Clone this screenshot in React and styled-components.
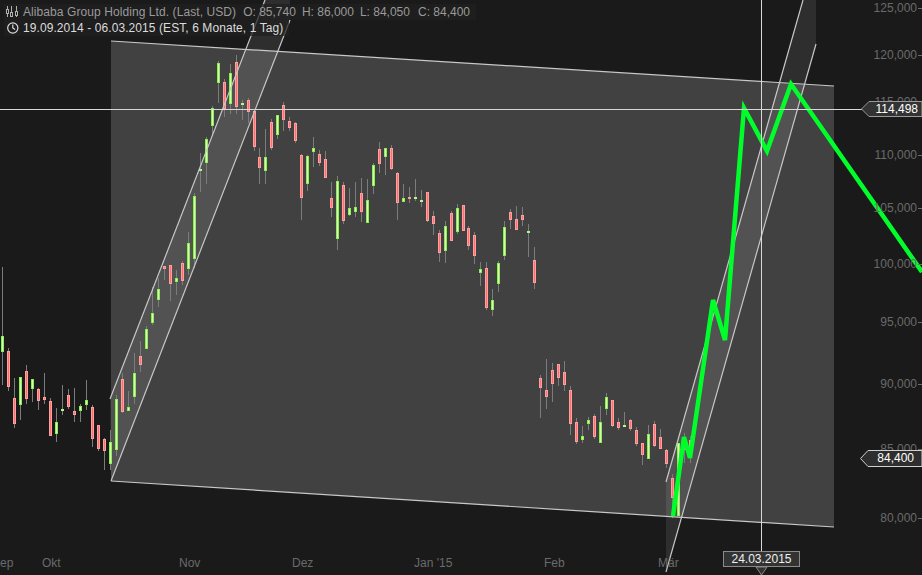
import React from "react";
import styled, { createGlobalStyle } from "styled-components";

const GlobalStyle = createGlobalStyle`
  html, body {
    margin: 0;
    padding: 0;
    background: #1a1a1a;
  }
`;

const Page = styled.div`
  position: relative;
  width: 922px;
  height: 575px;
  overflow: hidden;
  background: #1a1a1a;
  font-family: "Liberation Sans", Arial, sans-serif;
  font-size: 12px;
`;

const Chart = styled.svg`
  display: block;
  width: 922px;
  height: 575px;
`;

const Legend = styled.div`
  position: absolute;
  top: 4px;
  left: 4px;
  display: flex;
  flex-direction: column;
  align-items: flex-start;
`;

const LegendRow = styled.div`
  display: flex;
  align-items: center;
  gap: 4px;
  height: 16px;
  padding: 0 6px 0 2px;
  background: rgba(32, 32, 32, 0.72);
  color: ${({ $bright }) => ($bright ? "#dcdcdc" : "#9a9a9a")};
  letter-spacing: 0.08px;
  white-space: nowrap;
`;

const Title = styled.span`
  margin-right: 1px;
`;

const Value = styled.span`
  margin-left: 2px;
  letter-spacing: 0;
  &:last-child {
    margin-left: 4px;
  }
`;

const PriceTag = styled.div`
  position: absolute;
  top: ${({ $top }) => $top}px;
  left: ${({ $left }) => $left}px;
  width: ${({ $width }) => $width}px;
  height: 16px;
  display: flex;
  align-items: center;
  justify-content: flex-end;
  padding-right: ${({ $pad }) => $pad}px;
  box-sizing: border-box;
  color: #fff;
`;

const TagShape = styled.svg`
  position: absolute;
  top: 0;
  left: 0;
`;

const TagText = styled.span`
  position: relative;
`;

const DateTag = styled.div`
  position: absolute;
  top: 551px;
  left: 723px;
  width: 77px;
  height: 16px;
  box-sizing: border-box;
  display: flex;
  align-items: center;
  justify-content: center;
  background: #333;
  border: 1px solid #8a8a8a;
  color: #f0f0f0;
`;

// x, wick top, wick bottom, body top, body bottom, g = green / r = red
const candles = [
  [2, 267, 385, 336, 352, "g"], [8, 348, 391, 351, 387, "r"], [14, 378, 428, 398, 424, "r"],
  [20, 377, 420, 377, 405, "g"], [26, 365, 404, 371, 399, "r"], [32, 379, 402, 379, 389, "g"],
  [38, 388, 410, 389, 401, "r"], [44, 373, 404, 397, 400, "r"], [50, 398, 436, 401, 436, "r"],
  [56, 408, 442, 422, 434, "g"], [62, 385, 415, 409, 410, "g"], [68, 389, 409, 395, 407, "r"],
  [74, 388, 422, 411, 415, "r"], [80, 404, 422, 406, 411, "g"], [86, 380, 410, 400, 405, "g"],
  [92, 405, 447, 407, 439, "r"], [98, 425, 451, 425, 449, "r"], [104, 438, 470, 439, 451, "r"],
  [110, 430, 470, 442, 464, "g"], [116, 395, 456, 399, 450, "g"], [122, 373, 413, 379, 412, "r"],
  [128, 391, 411, 407, 411, "g"], [134, 353, 404, 373, 397, "g"], [140, 341, 372, 356, 365, "r"],
  [146, 326, 349, 329, 349, "g"], [152, 287, 325, 313, 323, "g"], [158, 278, 307, 289, 300, "g"],
  [164, 266, 280, 266, 269, "r"], [170, 265, 301, 265, 284, "r"], [176, 270, 295, 278, 282, "g"],
  [182, 261, 285, 263, 281, "r"], [188, 232, 275, 243, 269, "g"], [194, 193, 268, 196, 259, "g"],
  [200, 153, 192, 169, 171, "g"], [206, 137, 184, 139, 163, "g"], [212, 106, 136, 108, 126, "g"],
  [218, 61, 103, 63, 83, "g"], [224, 79, 117, 82, 109, "r"], [230, 64, 114, 73, 104, "g"],
  [236, 55, 114, 62, 107, "r"], [242, 100, 120, 103, 104, "g"], [248, 98, 123, 100, 112, "r"],
  [254, 111, 151, 111, 147, "r"], [259, 148, 184, 157, 168, "r"], [265, 129, 184, 157, 171, "g"],
  [271, 119, 150, 122, 148, "r"], [277, 115, 139, 115, 135, "g"], [283, 102, 131, 105, 120, "r"],
  [289, 117, 131, 121, 128, "r"], [295, 122, 143, 123, 141, "r"], [301, 154, 220, 155, 198, "r"],
  [307, 155, 191, 156, 184, "g"], [313, 137, 167, 148, 152, "g"], [319, 150, 166, 154, 163, "r"],
  [325, 151, 178, 159, 178, "r"], [331, 182, 217, 198, 208, "r"], [337, 176, 250, 181, 239, "g"],
  [343, 182, 224, 185, 221, "r"], [349, 188, 216, 208, 215, "g"], [355, 182, 217, 207, 212, "g"],
  [361, 178, 222, 193, 212, "r"], [367, 179, 223, 200, 223, "g"], [373, 163, 194, 165, 186, "g"],
  [379, 142, 173, 149, 164, "r"], [385, 148, 175, 148, 157, "g"], [391, 145, 170, 148, 169, "r"],
  [397, 172, 220, 173, 203, "r"], [403, 184, 202, 198, 202, "g"], [409, 187, 203, 197, 199, "r"],
  [415, 179, 201, 197, 199, "g"], [421, 190, 207, 200, 202, "g"], [427, 192, 222, 192, 221, "r"],
  [433, 211, 235, 216, 224, "r"], [439, 230, 262, 233, 253, "r"], [445, 221, 263, 226, 251, "g"],
  [451, 211, 241, 213, 241, "r"], [457, 204, 234, 208, 232, "g"], [463, 205, 231, 205, 231, "r"],
  [468, 226, 250, 228, 246, "r"], [474, 232, 264, 235, 256, "r"], [480, 262, 286, 269, 273, "g"],
  [486, 262, 310, 268, 308, "r"], [492, 289, 316, 300, 310, "g"], [498, 261, 292, 263, 284, "g"],
  [504, 221, 260, 227, 256, "g"], [510, 209, 229, 212, 220, "r"], [516, 206, 230, 219, 230, "r"],
  [522, 207, 226, 215, 220, "r"], [528, 224, 257, 231, 232, "g"], [534, 247, 289, 260, 283, "r"],
  [540, 375, 418, 378, 388, "r"], [546, 359, 409, 390, 397, "r"], [552, 363, 402, 370, 384, "r"],
  [558, 364, 386, 364, 378, "r"], [564, 361, 391, 372, 385, "r"], [570, 386, 435, 390, 424, "r"],
  [576, 418, 444, 422, 442, "r"], [582, 426, 443, 436, 440, "g"], [588, 417, 430, 420, 424, "g"],
  [594, 414, 439, 416, 437, "r"], [600, 406, 443, 422, 443, "g"], [606, 393, 415, 397, 409, "g"],
  [612, 400, 427, 400, 426, "r"], [618, 418, 430, 422, 428, "r"], [624, 412, 427, 425, 427, "g"],
  [630, 419, 431, 420, 429, "r"], [636, 427, 446, 430, 444, "r"], [642, 443, 465, 443, 455, "r"],
  [648, 425, 459, 434, 459, "g"], [654, 421, 447, 424, 446, "r"], [660, 429, 449, 437, 449, "r"],
  [666, 449, 468, 450, 464, "r"], [672, 474, 518, 478, 498, "r"], [678, 443, 516, 443, 516, "g"],
  [684, 433, 463, 440, 450, "r"], [690, 436, 463, 440, 450, "r"],
];

const prices = [
  ["125,000", 8], ["120,000", 55], ["115,000", 102], ["110,000", 155], ["105,000", 208],
  ["100,000", 264], ["95,000", 322], ["90,000", 384], ["85,000", 449], ["80,000", 518],
];

const months = [
  ["ep", 0], ["Okt", 42], ["Nov", 179], ["Dez", 292], ["Jan '15", 414], ["Feb", 544], ["Mär", 658],
];

const Candle = ({ c }) => {
  const [x, wt, wb, bt, bb, kind] = c;
  const green = kind === "g";
  const h = bb - bt;
  return (
    <g>
      <line x1={x + 0.5} x2={x + 0.5} y1={wt} y2={wb} stroke="#7c7c7c" />
      {h < 3 ? (
        <rect x={x - 1} y={bt} width={3} height={2} fill={green ? "#b0f888" : "#ff9c9c"} />
      ) : (
        <rect
          x={x - 0.5}
          y={bt + 0.5}
          width={2}
          height={h - 1}
          fill={green ? "#d8ffc0" : "#ff6f6f"}
          stroke={green ? "#8cf04c" : "#ffa0a0"}
        />
      )}
    </g>
  );
};

const BarsIcon = () => (
  <svg width="13" height="12" viewBox="0 0 13 12" fill="none" stroke="#b0b0b0">
    <path d="M1.5 0v11M5.5 0v11M10.5 0v11" />
    <rect x="0.5" y="3.5" width="2" height="4" fill="#1a1a1a" />
    <rect x="4.5" y="6.5" width="2" height="4" fill="#1a1a1a" />
    <rect x="9.5" y="5.5" width="2" height="4" fill="#1a1a1a" />
  </svg>
);

const ClockIcon = () => (
  <svg width="13" height="14" viewBox="0 0 13 14" fill="none" stroke="#dcdcdc" strokeWidth="1.2">
    <circle cx="6.8" cy="7" r="5.1" />
    <path d="M6.8 3.6V7l2.3 1.6" />
  </svg>
);

const App = () => (
  <Page>
    <GlobalStyle />
    <Chart viewBox="0 0 922 575">
      <polygon points="111,41 834,86 834,527 111,481" fill="#414141" />
      <polygon points="110,399 265,0 290,0 290,20 111,481" fill="rgba(255,255,255,0.09)" />
      <polygon points="666,482 803,0 816,0 816,44 666,572" fill="rgba(255,255,255,0.09)" />

      {candles.map((c) => (
        <Candle key={c[0]} c={c} />
      ))}

      <g stroke="#c8c8c8" strokeWidth="1.2" fill="none">
        <line x1="111" y1="41" x2="834" y2="86" />
        <line x1="111" y1="481" x2="834" y2="527" />
        <line x1="110" y1="399" x2="265" y2="0" />
        <line x1="111" y1="481" x2="290" y2="20" />
        <line x1="666" y1="482" x2="803" y2="0" />
        <line x1="666" y1="572" x2="816" y2="44" />
      </g>

      <polyline
        points="673,516 684,437 690,458 713,300 725,340 744,108 767,151 791,84 922,272"
        fill="none"
        stroke="#00ff2a"
        strokeWidth="4.5"
        strokeLinejoin="miter"
      />

      <line x1="0" x2="862" y1="109.5" y2="109.5" stroke="#d8d8d8" />
      <line x1="761.5" x2="761.5" y1="0" y2="552" stroke="#d8d8d8" />

      <g fill="#6a6a6a" fontSize="12" fontFamily='"Liberation Sans", Arial, sans-serif'>
        {prices.map(([label, y]) => (
          <g key={label}>
            <text x="917" y={y + 4} textAnchor="end">{label}</text>
            <line x1="918" x2="922" y1={y + 0.5} y2={y + 0.5} stroke="#6a6a6a" />
          </g>
        ))}
        {months.map(([label, x]) => (
          <text key={label} x={x} y="567">{label}</text>
        ))}
      </g>

      <polygon points="756,567 767,567 761.5,575" fill="#333" stroke="#8a8a8a" />
    </Chart>

    <Legend>
      <LegendRow>
        <BarsIcon />
        <Title>Alibaba Group Holding Ltd. (Last, USD)</Title>
        <Value>O: 85,740</Value>
        <Value>H: 86,000</Value>
        <Value>L: 84,050</Value>
        <Value>C: 84,400</Value>
      </LegendRow>
      <LegendRow $bright>
        <ClockIcon />
        <span>19.09.2014 - 06.03.2015 (EST, 6 Monate, 1 Tag)</span>
      </LegendRow>
    </Legend>

    <PriceTag $top={101} $left={861} $width={61} $pad={4}>
      <TagShape width="61" height="16">
        <polygon points="61,0.5 8,0.5 0.5,8 8,15.5 61,15.5" fill="#333" stroke="#9a9a9a" />
      </TagShape>
      <TagText>114,498</TagText>
    </PriceTag>

    <PriceTag $top={450} $left={860} $width={62} $pad={8}>
      <TagShape width="62" height="17">
        <polygon points="62,0.5 8,0.5 0.5,8.5 8,16.5 62,16.5" fill="#2e2e2e" stroke="#d0d0d0" />
      </TagShape>
      <TagText>84,400</TagText>
    </PriceTag>

    <DateTag>24.03.2015</DateTag>
  </Page>
);

export default App;
